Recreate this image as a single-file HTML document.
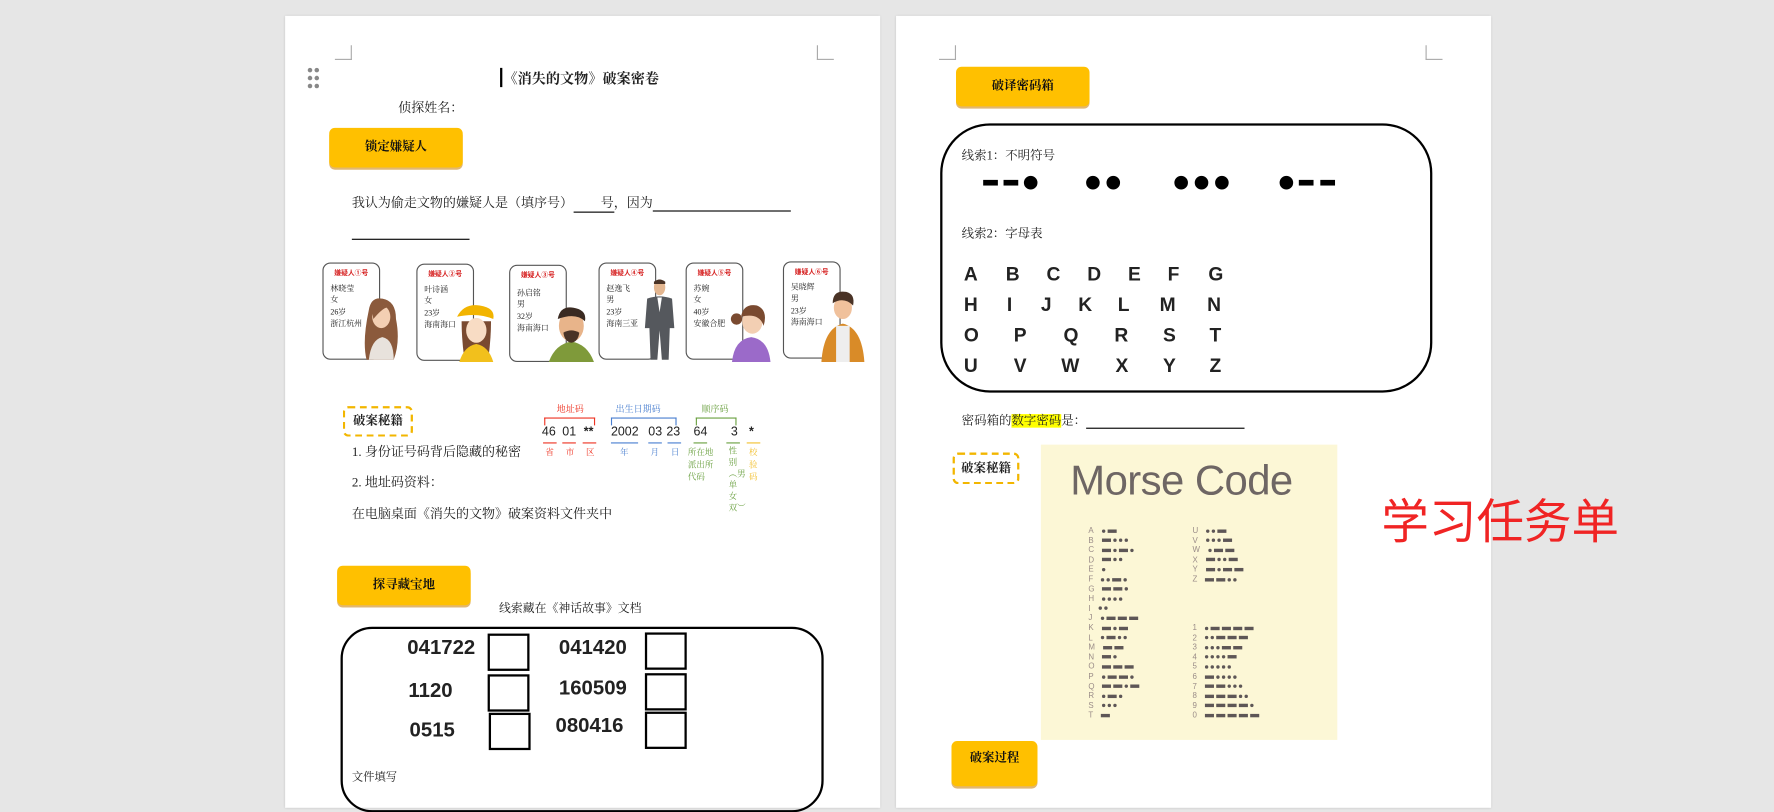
<!DOCTYPE html>
<html><head><meta charset="utf-8">
<style>
html,body{margin:0;padding:0;}
body{width:1774px;height:775px;overflow:hidden;background:#e6e6e6;}
#w{position:absolute;left:0;top:0;width:1568px;height:685px;transform:scale(1.13138);transform-origin:0 0;background:#e6e6e6;font-family:"Liberation Serif","Noto Serif CJK SC",serif;color:#222;}
.a{position:absolute;white-space:nowrap;}
.page{position:absolute;background:#fff;top:14px;height:700px;width:526px;box-shadow:0 0 2px rgba(0,0,0,.15);}
.cm{position:absolute;width:14px;height:12px;}
.btn{position:absolute;background:#ffc000;border-radius:5px;box-shadow:0 2px 0 #e2b770;font-weight:bold;font-size:11px;text-align:center;color:#111;}
.dash{position:absolute;border:2px dashed #f2b600;border-radius:5px;font-weight:bold;font-size:11px;text-align:center;}
.t{font-size:11.5px;}
.card{position:absolute;width:49px;height:84px;border:1px solid #555;border-radius:7px;background:#fff;}
.card .lb{position:absolute;left:0;right:0;top:3px;text-align:center;color:#d62020;font-size:6px;font-weight:bold;font-family:"Liberation Sans","Noto Sans CJK SC",sans-serif;}
.card .tx{position:absolute;left:6px;top:17px;font-size:7px;line-height:10.4px;}
.card svg{position:absolute;}
.num{position:absolute;font-family:"Liberation Sans",sans-serif;font-weight:bold;font-size:18px;}
.bx{position:absolute;width:33px;height:29px;border:2px solid #000;}
.id{position:absolute;font-family:"Liberation Sans",sans-serif;font-size:11px;}
.sm{position:absolute;font-size:7.5px;}
.L{position:absolute;font-family:"Liberation Sans",sans-serif;font-weight:bold;font-size:17px;}
.ml{position:absolute;font-family:"Liberation Sans",sans-serif;font-size:7px;color:#9a8c88;line-height:8.6px;}
.ml div{height:8.6px;}
.ml i{display:inline-block;width:3px;height:3px;border-radius:50%;background:#5d5656;margin:0 1px;vertical-align:middle;}
.ml b{display:inline-block;width:8px;height:3px;background:#5d5656;margin:0 1px;vertical-align:middle;}
.ml span{display:inline-block;width:6px;}
</style></head><body><div id="w">

<!-- PAGE 1 -->
<div class="page" style="left:252px;"></div>
<div class="cm" style="left:296px;top:40px;border-right:1px solid #aaa;border-bottom:1px solid #aaa;"></div>
<div class="cm" style="left:722px;top:40px;border-left:1px solid #aaa;border-bottom:1px solid #aaa;"></div>
<svg class="a" style="left:271px;top:59px" width="14" height="20"><g fill="#888"><circle cx="3" cy="3" r="2"/><circle cx="9" cy="3" r="2"/><circle cx="3" cy="10" r="2"/><circle cx="9" cy="10" r="2"/><circle cx="3" cy="17" r="2"/><circle cx="9" cy="17" r="2"/></g></svg>
<div class="a" style="left:442px;top:60px;width:1.5px;height:17px;background:#000"></div>
<div class="a" style="left:445px;top:60px;font-size:12.5px;font-weight:bold;">《消失的文物》破案密卷</div>
<div class="a t" style="left:352px;top:87px;">侦探姓名：</div>
<div class="btn" style="left:291px;top:113px;width:118px;height:35px;line-height:35px;">锁定嫌疑人</div>
<div class="a t" style="left:311px;top:171px;">我认为偷走文物的嫌疑人是（填序号）<span style="display:inline-block;width:36px;border-bottom:1px solid #000;text-align:right">号</span>，因为<span style="display:inline-block;width:122px;border-bottom:1px solid #000;">&nbsp;</span></div>
<div class="a" style="left:311px;top:211px;width:104px;border-top:1px solid #000"></div>

<!-- cards -->
<div class="card" style="left:285px;top:232px;"><div class="lb">嫌疑人①号</div><div class="tx">林晓莹<br>女<br>26岁<br>浙江杭州</div></div>
<div class="card" style="left:368px;top:233px;"><div class="lb">嫌疑人②号</div><div class="tx">叶诗涵<br>女<br>23岁<br>海南海口</div></div>
<div class="card" style="left:450px;top:234px;"><div class="lb">嫌疑人③号</div><div class="tx" style="top:19px">孙启铭<br>男<br>32岁<br>海南海口</div></div>
<div class="card" style="left:529px;top:232px;"><div class="lb">嫌疑人④号</div><div class="tx">赵逸飞<br>男<br>23岁<br>海南三亚</div></div>
<div class="card" style="left:606px;top:232px;"><div class="lb">嫌疑人⑤号</div><div class="tx">苏婉<br>女<br>40岁<br>安徽合肥</div></div>
<div class="card" style="left:692px;top:231px;"><div class="lb">嫌疑人⑥号</div><div class="tx">吴晓辉<br>男<br>23岁<br>海南海口</div></div>
<!-- people -->
<svg class="a" style="left:318px;top:262px" width="36" height="58"><path d="M8 12 Q10 0 20 2 Q32 4 32 20 Q36 40 30 56 L6 56 Q2 40 8 12Z" fill="#8b5a3c"/><path d="M8 56 Q10 38 20 36 Q30 38 30 56Z" fill="#e8e2dc"/><ellipse cx="19" cy="18" rx="8" ry="10" fill="#f3cfb3"/><path d="M11 14 Q14 4 26 10 Q22 8 12 20Z" fill="#8b5a3c"/></svg>
<svg class="a" style="left:402px;top:268px" width="38" height="52"><path d="M6 16 Q6 30 8 46 L30 46 Q32 30 32 16Z" fill="#7a4a30"/><path d="M4 52 Q8 38 19 36 Q30 38 34 52Z" fill="#f2c01c"/><ellipse cx="19" cy="24" rx="9" ry="11" fill="#f8dcc4"/><path d="M2 12 Q8 0 22 2 Q36 4 34 14 Q20 8 2 12Z" fill="#f2b400"/></svg>
<svg class="a" style="left:483px;top:270px" width="44" height="50"><path d="M2 50 Q8 34 22 32 Q36 34 42 50Z" fill="#7f9a3a"/><ellipse cx="22" cy="18" rx="11" ry="14" fill="#e8b48a"/><path d="M10 12 Q12 0 24 2 Q36 4 34 14 Q26 6 10 12Z" fill="#3a2a22"/><path d="M15 24 Q22 20 29 24 Q28 32 22 33 Q16 32 15 24Z" fill="#4a3326"/></svg>
<svg class="a" style="left:566px;top:246px" width="34" height="74"><ellipse cx="17" cy="8" rx="5" ry="7" fill="#e3b690"/><path d="M12 3 Q17 -1 22 3 L22 5 L12 5Z" fill="#4a3326"/><path d="M6 18 Q17 14 28 18 L30 44 L26 44 L25 72 L19 72 L17 46 L15 72 L9 72 L8 44 L4 44Z" fill="#55585d"/><path d="M15 17 L17 30 L19 17Z" fill="#fff"/></svg>
<svg class="a" style="left:643px;top:268px" width="42" height="52"><circle cx="8" cy="14" r="5" fill="#7a4a30"/><path d="M4 52 Q6 32 21 30 Q36 32 38 52Z" fill="#9b6ac9"/><ellipse cx="22" cy="16" rx="9" ry="11" fill="#f3cfb3"/><path d="M12 12 Q14 0 26 2 Q36 6 32 20 Q28 8 12 12Z" fill="#7a4a30"/></svg>
<svg class="a" style="left:722px;top:256px" width="46" height="64"><path d="M4 64 Q6 34 23 30 Q40 34 42 64Z" fill="#d98b28"/><rect x="17" y="32" width="12" height="32" fill="#eee"/><ellipse cx="23" cy="16" rx="8" ry="10" fill="#f0c19c"/><path d="M14 12 Q14 0 26 2 Q34 4 32 14 Q24 6 14 12Z" fill="#4a3326"/></svg>

<!-- 破案秘籍 -->
<div class="dash" style="left:303px;top:359px;width:58px;height:23px;line-height:23px;">破案秘籍</div>
<div class="sm" style="left:492px;top:356px;color:#e32;font-size:8px">地址码</div>
<div class="sm" style="left:544px;top:356px;color:#4a7fd0;font-size:8px">出生日期码</div>
<div class="sm" style="left:620px;top:356px;color:#6aa040;font-size:8px">顺序码</div>
<div class="a" style="left:481px;top:369px;width:43px;height:6px;border:1px solid #e32;border-bottom:none"></div>
<div class="a" style="left:540px;top:369px;width:56px;height:6px;border:1px solid #4a7fd0;border-bottom:none"></div>
<div class="a" style="left:615px;top:369px;width:34px;height:6px;border:1px solid #6aa040;border-bottom:none"></div>
<div class="id" style="left:479px;top:376px">46</div><div class="id" style="left:497px;top:376px">01</div><div class="id" style="left:516px;top:376px;font-weight:bold">**</div>
<div class="id" style="left:540px;top:376px">2002</div><div class="id" style="left:573px;top:376px">03</div><div class="id" style="left:589px;top:376px">23</div>
<div class="id" style="left:613px;top:376px">64</div><div class="id" style="left:646px;top:376px">3</div><div class="id" style="left:662px;top:376px;font-weight:bold">*</div>
<div class="a" style="left:480px;top:391px;width:12px;border-top:1.5px solid #e32"></div>
<div class="a" style="left:497px;top:391px;width:12px;border-top:1.5px solid #e32"></div>
<div class="a" style="left:515px;top:391px;width:12px;border-top:1.5px solid #e32"></div>
<div class="a" style="left:540px;top:391px;width:24px;border-top:1.5px solid #4a7fd0"></div>
<div class="a" style="left:573px;top:391px;width:12px;border-top:1.5px solid #4a7fd0"></div>
<div class="a" style="left:590px;top:391px;width:12px;border-top:1.5px solid #4a7fd0"></div>
<div class="a" style="left:613px;top:391px;width:12px;border-top:1.5px solid #6aa040"></div>
<div class="a" style="left:642px;top:391px;width:12px;border-top:1.5px solid #6aa040"></div>
<div class="a" style="left:660px;top:391px;width:12px;border-top:1.5px solid #f2c030"></div>
<div class="sm" style="left:482px;top:394px;color:#e32">省</div><div class="sm" style="left:500px;top:394px;color:#e32">市</div><div class="sm" style="left:518px;top:394px;color:#e32">区</div>
<div class="sm" style="left:548px;top:394px;color:#4a7fd0">年</div><div class="sm" style="left:575px;top:394px;color:#4a7fd0">月</div><div class="sm" style="left:593px;top:394px;color:#4a7fd0">日</div>
<div class="sm" style="left:608px;top:394px;color:#6aa040;white-space:normal;width:25px;line-height:11px">所在地派出所代码</div>
<div class="sm" style="left:644px;top:394px;color:#6aa040;width:8px;white-space:normal;line-height:10px">性别︵男单女双︶</div>
<div class="sm" style="left:662px;top:394px;color:#f2c030;width:8px;white-space:normal;line-height:11px">校验码</div>
<div class="a t" style="left:311px;top:391px;">1. 身份证号码背后隐藏的秘密</div>
<div class="a t" style="left:311px;top:418px;">2. 地址码资料：</div>
<div class="a t" style="left:311px;top:446px;">在电脑桌面《消失的文物》破案资料文件夹中</div>

<div class="btn" style="left:298px;top:500px;width:118px;height:35px;line-height:35px;">探寻藏宝地</div>
<div class="a" style="left:441px;top:530px;font-size:10.5px;">线索藏在《神话故事》文档</div>
<div class="a" style="left:301px;top:554px;width:423px;height:160px;border:2px solid #000;border-radius:28px;"></div>
<div class="num" style="left:360px;top:562px">041722</div><div class="bx" style="left:431px;top:560px"></div>
<div class="num" style="left:494px;top:562px">041420</div><div class="bx" style="left:570px;top:559px"></div>
<div class="num" style="left:361px;top:600px">1120</div><div class="bx" style="left:431px;top:596px"></div>
<div class="num" style="left:494px;top:598px">160509</div><div class="bx" style="left:570px;top:595px"></div>
<div class="num" style="left:362px;top:635px">0515</div><div class="bx" style="left:432px;top:630px"></div>
<div class="num" style="left:491px;top:631px">080416</div><div class="bx" style="left:570px;top:629px"></div>
<div class="a" style="left:311px;top:678px;font-size:10px;">文件填写</div>

<!-- PAGE 2 -->
<div class="page" style="left:792px;"></div>
<div class="cm" style="left:830px;top:40px;border-right:1px solid #aaa;border-bottom:1px solid #aaa;"></div>
<div class="cm" style="left:1260px;top:40px;border-left:1px solid #aaa;border-bottom:1px solid #aaa;"></div>
<div class="btn" style="left:845px;top:59px;width:118px;height:35px;line-height:35px;">破译密码箱</div>
<div class="a" style="left:831px;top:109px;width:431px;height:234px;border:2px solid #000;border-radius:44px;"></div>
<div class="a" style="left:850px;top:129px;font-size:11px;">线索1：不明符号</div>
<svg class="a" style="left:866px;top:153px" width="320" height="16"><g fill="#000">
<rect x="3" y="6" width="13" height="5"/><rect x="21" y="6" width="13" height="5"/><circle cx="45" cy="8.5" r="6"/>
<circle cx="100" cy="8.5" r="6"/><circle cx="118" cy="8.5" r="6"/>
<circle cx="178" cy="8.5" r="6"/><circle cx="196" cy="8.5" r="6"/><circle cx="214" cy="8.5" r="6"/>
<circle cx="271" cy="8.5" r="6"/><rect x="282" y="6" width="13" height="5"/><rect x="301" y="6" width="13" height="5"/></g></svg>
<div class="a" style="left:850px;top:198px;font-size:11px;">线索2：字母表</div>
<div class="L" style="left:852px;top:233px">A</div><div class="L" style="left:889px;top:233px">B</div><div class="L" style="left:925px;top:233px">C</div><div class="L" style="left:961px;top:233px">D</div><div class="L" style="left:997px;top:233px">E</div><div class="L" style="left:1032px;top:233px">F</div><div class="L" style="left:1068px;top:233px">G</div>
<div class="L" style="left:852px;top:260px">H</div><div class="L" style="left:890px;top:260px">I</div><div class="L" style="left:920px;top:260px">J</div><div class="L" style="left:953px;top:260px">K</div><div class="L" style="left:988px;top:260px">L</div><div class="L" style="left:1025px;top:260px">M</div><div class="L" style="left:1067px;top:260px">N</div>
<div class="L" style="left:852px;top:287px">O</div><div class="L" style="left:896px;top:287px">P</div><div class="L" style="left:940px;top:287px">Q</div><div class="L" style="left:985px;top:287px">R</div><div class="L" style="left:1028px;top:287px">S</div><div class="L" style="left:1069px;top:287px">T</div>
<div class="L" style="left:852px;top:314px">U</div><div class="L" style="left:896px;top:314px">V</div><div class="L" style="left:938px;top:314px">W</div><div class="L" style="left:986px;top:314px">X</div><div class="L" style="left:1028px;top:314px">Y</div><div class="L" style="left:1069px;top:314px">Z</div>
<div class="a" style="left:850px;top:363px;font-size:11px;">密码箱的<span style="background:#ffff00">数字密码</span>是：<span style="display:inline-block;width:140px;border-bottom:1px solid #000">&nbsp;</span></div>
<div class="dash" style="left:842px;top:400px;width:55px;height:24px;line-height:24px;">破案秘籍</div>

<div class="a" style="left:920px;top:393px;width:262px;height:261px;background:#fcf7d6;"></div>
<div class="a" style="left:946px;top:404px;font-family:'Liberation Sans',sans-serif;font-size:37px;color:#6e6664;letter-spacing:-0.5px">Morse Code</div>
<div class="ml" style="left:962px;top:466px">
<div>A<span></span><i></i><b></b></div><div>B<span></span><b></b><i></i><i></i><i></i></div><div>C<span></span><b></b><i></i><b></b><i></i></div><div>D<span></span><b></b><i></i><i></i></div><div>E<span></span><i></i></div><div>F<span></span><i></i><i></i><b></b><i></i></div><div>G<span></span><b></b><b></b><i></i></div><div>H<span></span><i></i><i></i><i></i><i></i></div><div>I<span></span><i></i><i></i></div><div>J<span></span><i></i><b></b><b></b><b></b></div><div>K<span></span><b></b><i></i><b></b></div><div>L<span></span><i></i><b></b><i></i><i></i></div><div>M<span></span><b></b><b></b></div><div>N<span></span><b></b><i></i></div><div>O<span></span><b></b><b></b><b></b></div><div>P<span></span><i></i><b></b><b></b><i></i></div><div>Q<span></span><b></b><b></b><i></i><b></b></div><div>R<span></span><i></i><b></b><i></i></div><div>S<span></span><i></i><i></i><i></i></div><div>T<span></span><b></b></div>
</div>
<div class="ml" style="left:1054px;top:466px">
<div>U<span></span><i></i><i></i><b></b></div><div>V<span></span><i></i><i></i><i></i><b></b></div><div>W<span></span><i></i><b></b><b></b></div><div>X<span></span><b></b><i></i><i></i><b></b></div><div>Y<span></span><b></b><i></i><b></b><b></b></div><div>Z<span></span><b></b><b></b><i></i><i></i></div>
</div>
<div class="ml" style="left:1054px;top:552px">
<div>1<span></span><i></i><b></b><b></b><b></b><b></b></div><div>2<span></span><i></i><i></i><b></b><b></b><b></b></div><div>3<span></span><i></i><i></i><i></i><b></b><b></b></div><div>4<span></span><i></i><i></i><i></i><i></i><b></b></div><div>5<span></span><i></i><i></i><i></i><i></i><i></i></div><div>6<span></span><b></b><i></i><i></i><i></i><i></i></div><div>7<span></span><b></b><b></b><i></i><i></i><i></i></div><div>8<span></span><b></b><b></b><b></b><i></i><i></i></div><div>9<span></span><b></b><b></b><b></b><b></b><i></i></div><div>0<span></span><b></b><b></b><b></b><b></b><b></b></div>
</div>

<div class="a" style="left:1221px;top:428px;font-family:'Liberation Sans','Noto Sans CJK SC',sans-serif;font-size:42px;color:#f02424;">学习任务单</div>
<div class="btn" style="left:841px;top:655px;width:76px;height:40px;line-height:30px;">破案过程</div>

</div></body></html>
